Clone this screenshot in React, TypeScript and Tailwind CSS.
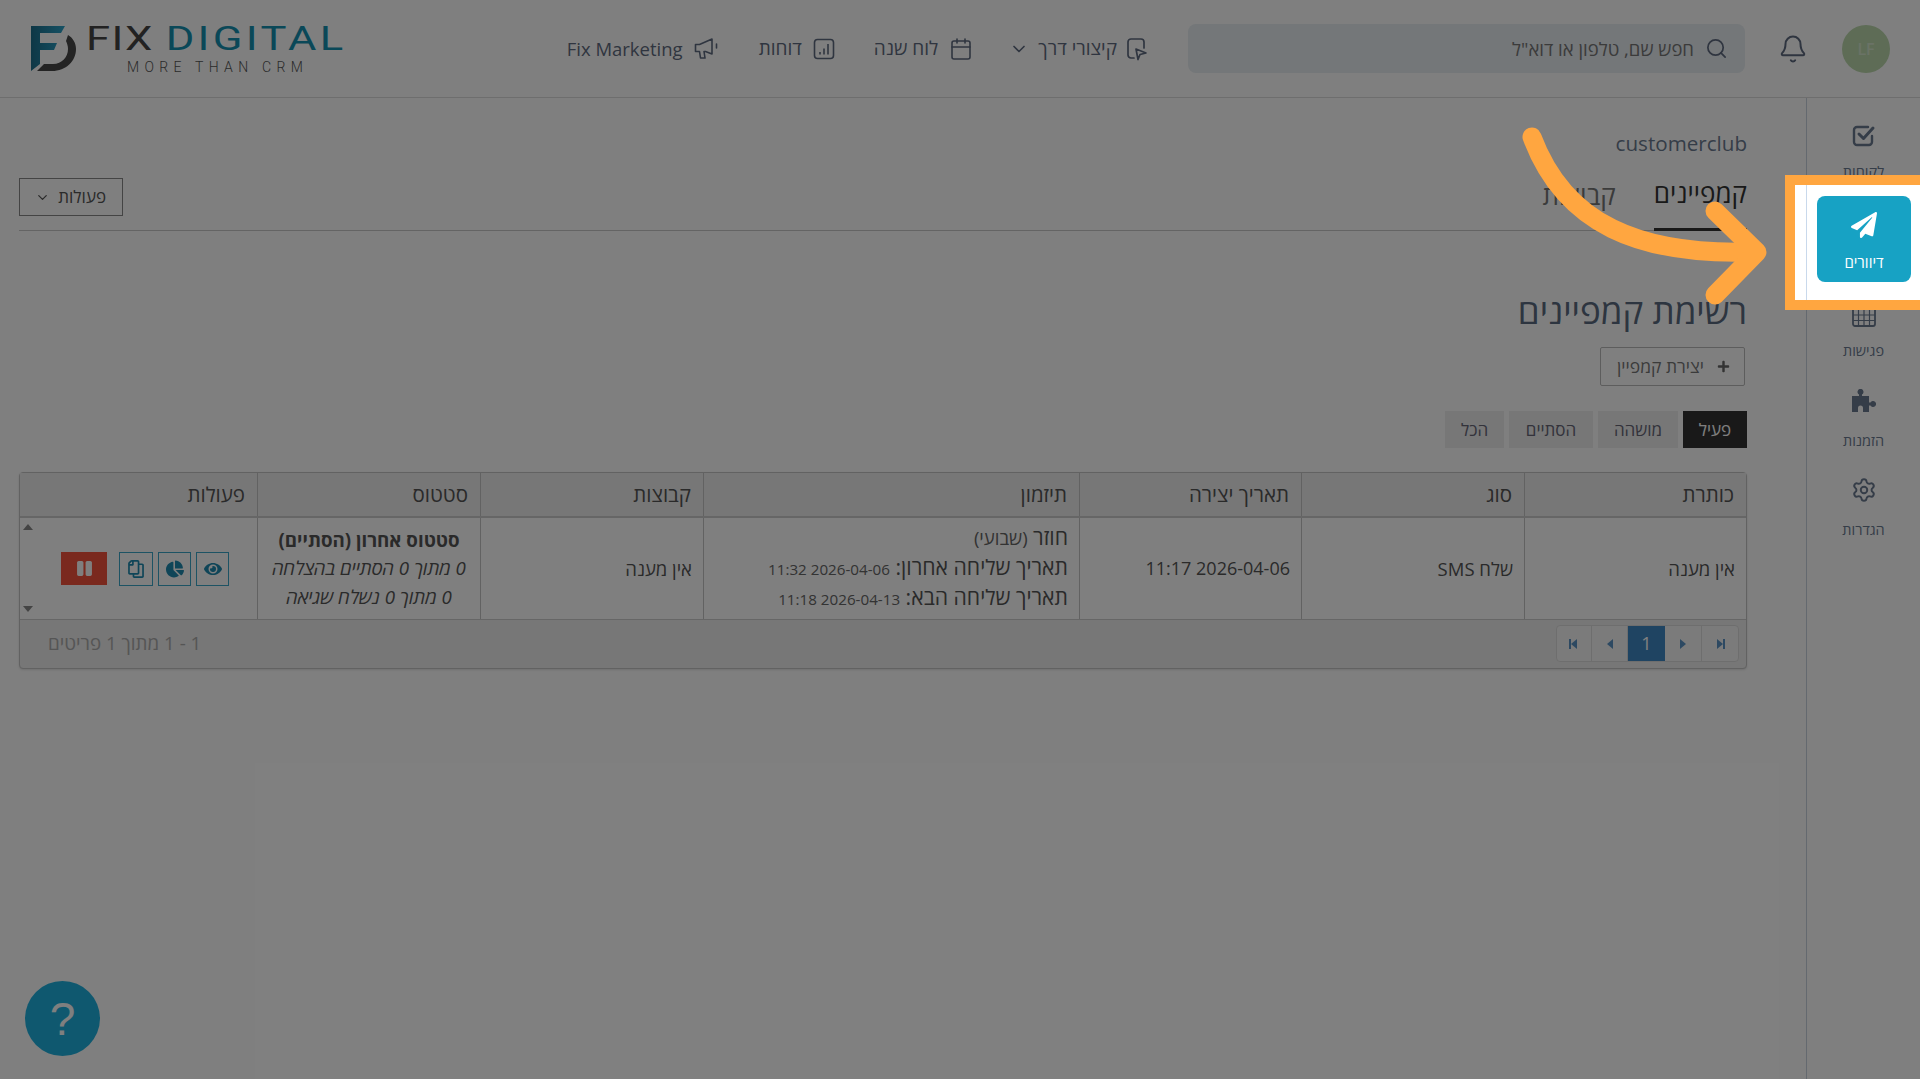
import React from "react";
import { Bell, Search, ChevronDown, Calendar, Settings } from "lucide-react";
import { FaPaperPlane, FaChartPie, FaEye, FaRegCopy, FaPlus, FaPause } from "react-icons/fa";

const Nav = ({ icon, label, size = "text-[19px]" }: { icon: React.ReactNode; label: string; size?: string }) => (
  <div className="flex items-center text-[#5f6b80]">
    {icon}
    <span className={`${size} font-medium text-[#5f6b80] mr-[11px]`}>{label}</span>
  </div>
);

const Tri = ({ dir, bar }: { dir: "l" | "r"; bar?: boolean }) => (
  <svg width="14" height="14" viewBox="0 0 14 14" fill="#5b93c4">
    {dir === "l" ? <path d="M10 2v10L4 7z" /> : <path d="M4 2v10L10 7z" />}
    {bar && (dir === "l" ? <rect x="2" y="2" width="2" height="10" /> : <rect x="10" y="2" width="2" height="10" />)}
  </svg>
);

const SideItem = ({ icon, label, lift }: { icon: React.ReactNode; label: string; lift?: boolean }) => (
  <div className="w-[94px] h-[86px] flex flex-col items-center text-[#6b7a90]">
    <div className={`h-[60px] flex items-center justify-center ${lift ? "pb-[8px]" : ""}`}>{icon}</div>
    <span className="text-[14.5px] leading-[12px] text-[#6b7a90]">{label}</span>
  </div>
);

const Th = ({ w, children }: { w: string; children: React.ReactNode }) => (
  <div className={`${w} h-full flex items-center px-[12px] border-l border-[#c4c4c4] last:border-l-0 text-[20.5px] text-[#555]`}>{children}</div>
);

const Td = ({ w, children }: { w: string; children: React.ReactNode }) => (
  <div className={`${w} h-full flex items-center px-[11px] border-l border-[#c4c4c4] last:border-l-0 text-[18.5px] text-[#555]`}>{children}</div>
);

export default function App() {
  return (
    <div dir="rtl" className="relative w-[1920px] h-[1079px] overflow-hidden bg-white font-['Open_Sans','Noto_Sans',sans-serif]">
      <header className="h-[98px] border-b border-[#dcdcdc] flex items-center pr-[30px] pl-[31px]">
        <div className="w-[48px] h-[48px] rounded-full bg-[#bcd9ad] flex items-center justify-center text-[#d5e6cc] text-[16px] font-semibold" dir="ltr">LF</div>
        <Bell size={30} strokeWidth={1.6} className="text-[#5f6b80] mr-[34px]" />
        <div className="w-[557px] h-[49px] mr-[33px] rounded-[8px] bg-[#e8eef2] flex items-center pr-[17px]">
          <Search size={23} strokeWidth={1.8} className="text-[#5f6b80]" />
          <span className="mr-[11px] text-[18.5px] text-[#777]">חפש שם, טלפון או דוא"ל</span>
        </div>
        <div className="flex items-center mr-[40px]">
          <svg width="22" height="24" viewBox="0 0 22 24" fill="none" stroke="#5f6b80" strokeWidth="1.7" strokeLinejoin="round" strokeLinecap="round">
            <path d="M8 21H5a3 3 0 0 1-3-3V5a3 3 0 0 1 3-3h10a3 3 0 0 1 3 3v6" />
            <path d="M10 12l10 4-6 1.500-2 5z" />
          </svg>
          <span className="mr-[9px] text-[19px] font-medium text-[#5f6b80]">קיצורי דרך</span>
          <ChevronDown size={20} className="mr-[9px] text-[#5f6b80]" />
        </div>
        <div className="mr-[36px]">
          <Nav icon={<Calendar size={24} strokeWidth={1.6} />} label="לוח שנה" />
        </div>
        <div className="mr-[39px]">
          <Nav
            icon={
              <svg width="22" height="22" viewBox="0 0 22 22" fill="none" stroke="#5f6b80" strokeWidth="1.6">
                <rect x="1.500" y="1.500" width="19" height="19" rx="3" />
                <path d="M7 16.500v-2.500M11 16.500v-6M15 16.500V6" />
              </svg>
            }
            label="דוחות"
          />
        </div>
        <div className="mr-[40px]">
          <Nav
            size="text-[18.5px]"
            icon={
              <svg width="25" height="24" viewBox="0 0 25 24" fill="none" stroke="#5f6b80" strokeWidth="1.6" strokeLinejoin="round" strokeLinecap="round">
                <path d="M1.500 7.500h4L18 2v15l-6.500-2.500h-1.500l1 6.500H6.500l-1-6.500H1.500z" />
                <path d="M22.500 7v4" />
              </svg>
            }
            label="Fix Marketing"
          />
        </div>
        <div dir="ltr" className="mr-auto w-[312px] h-[46px] flex items-start">
          <svg width="48" height="46" viewBox="0 0 48 46">
            <defs>
              <linearGradient id="g" x1="0" y1="0" x2="1" y2="0">
                <stop offset="0" stopColor="#1d6f8c" />
                <stop offset="1" stopColor="#2ca3c9" />
              </linearGradient>
            </defs>
            <path d="M0 0h34l-4 7H9v10h17l-3 7H9v14l-9 7z" fill="url(#g)" />
            <path d="M37 9c5 3 8 8 8 14 0 12-10 22-24 22H6l7-7h9c9 0 15-7 15-15 0-3-1-6-2-8z" fill="#484848" />
          </svg>
          <div className="ml-[7px] flex flex-col items-start">
            <div className="text-[32.5px] leading-[26px] font-['Roboto',sans-serif] font-normal whitespace-nowrap h-[27px] origin-left scale-x-[1.34]">
              <span className="text-[#444] tracking-[1px]">FIX</span>
              <span className="text-[#1490b0] ml-[9px] tracking-[2.5px]">DIGITAL</span>
            </div>
            <div className="mt-[7px] ml-[41px] text-[14px] leading-[14px] tracking-[5.300px] font-['Roboto',sans-serif] font-light text-[#555] whitespace-nowrap">MORE THAN CRM</div>
          </div>
        </div>
      </header>

      <div className="flex h-[981px]">
        <aside className="w-[114px] h-full border-l border-[#c9d2de] flex flex-col items-center pt-[8px] gap-[3.500px]">
          <SideItem
            icon={
              <svg width="24" height="24" viewBox="0 0 24 24" fill="none" stroke="#6b7a90" strokeWidth="2.400" strokeLinecap="round" strokeLinejoin="round">
                <path d="M20 12v6a3 3 0 0 1-3 3H5a3 3 0 0 1-3-3V6a3 3 0 0 1 3-3h11" />
                <path d="M7 10l4.500 4.500L21 4" strokeWidth="3" />
              </svg>
            }
            label="לקוחות"
          />
          <div className="w-[94px] h-[86px]" />
          <SideItem
            icon={
              <svg width="24" height="24" viewBox="0 0 24 24" fill="none" stroke="#6b7a90" strokeWidth="1.200">
                <rect x="1" y="1" width="22" height="22" rx="2" strokeWidth="1.800" />
                <path d="M1 6.500h22M1 12h22M1 17.500h22M6.500 1v22M12 1v22M17.500 1v22" />
              </svg>
            }
            label="פגישות"
          />
          <SideItem
            lift
            icon={
              <svg width="24" height="24" viewBox="0 0 24 24" fill="#6b7a90">
                <path d="M0 7H7V5.500A3 3 0 1 1 10 5.500V7H17V13.500H18.500A3 3 0 1 1 18.500 16.500H17V23H11V19A2.500 2.500 0 0 0 6 19V23H0Z" />
              </svg>
            }
            label="הזמנות"
          />
          <SideItem lift icon={<Settings size={26} strokeWidth={1.8} />} label="הגדרות" />
        </aside>

        <main className="flex-1 pr-[59px] pl-[19px] pt-[31px]">
          <div className="text-[20.6px] leading-[28px] text-[#6b7a90] font-medium" dir="ltr">
            <div className="text-right">customerclub</div>
          </div>
          <div className="h-[74px] border-b border-[#c9c9c9] flex items-start justify-between">
            <div className="flex items-start gap-[38px]">
              <div className="h-[74px] pt-[2px] border-b-[3px] border-[#333] flex items-center text-[26px] text-[#333]">קמפיינים</div>
              <div className="h-[74px] pt-[2px] flex items-center text-[26px] text-[#777]">קבוצות</div>
            </div>
            <button className="mt-[21px] w-[104px] h-[38px] border-[1.5px] border-[#888] flex items-center justify-between pr-[16px] pl-[15px] text-[17px] text-[#555]">
              פעולות
              <ChevronDown size={15} />
            </button>
          </div>
          <h1 className="mt-[58px] text-[35px] leading-[44px] font-medium text-[#5a6a80]">רשימת קמפיינים</h1>
          <button className="mt-[14px] mr-[2px] w-[145px] h-[39px] border border-[#bbb] rounded-[2px] flex items-center pr-[14px] text-[17.5px] text-[#777]">
            <FaPlus size={13} className="text-[#666]" />
            <span className="mr-[13px]">יצירת קמפיין</span>
          </button>
          <div className="mt-[25px] flex gap-[5px]">
            <div className="w-[64px] h-[37px] bg-[#333] text-white text-[17px] flex items-center justify-center">פעיל</div>
            <div className="w-[80px] h-[37px] bg-[#eee] text-[#667] text-[17px] flex items-center justify-center">מושהה</div>
            <div className="w-[84px] h-[37px] bg-[#eee] text-[#667] text-[17px] flex items-center justify-center">הסתיים</div>
            <div className="w-[59px] h-[37px] bg-[#eee] text-[#667] text-[17px] flex items-center justify-center">הכל</div>
          </div>
          <div className="mt-[24px] h-[197px] w-[1728px] border border-[#c4c4c4] rounded-[4px] bg-[#eee] shadow-sm">
            <div className="h-[45px] bg-[#eee] border-b-2 border-[#ccc] flex">
              <Th w="w-[222px]">כותרת</Th>
              <Th w="w-[223px]">סוג</Th>
              <Th w="w-[222px]">תאריך יצירה</Th>
              <Th w="w-[376px]">תיזמון</Th>
              <Th w="w-[223px]">קבוצות</Th>
              <Th w="w-[223px]">סטטוס</Th>
              <Th w="flex-1">פעולות</Th>
            </div>
            <div className="h-[102px] bg-white border-b border-[#ccc] flex">
              <Td w="w-[222px]">אין מענה</Td>
              <Td w="w-[223px]">שלח SMS</Td>
              <Td w="w-[222px]"><span className="text-[18px]">2026-04-06 11:17</span></Td>
              <Td w="w-[376px]">
                <div className="leading-[28.500px] text-[21.2px] text-[#555]">
                  <div>חוזר <span className="text-[18.500px] text-[#666]">(שבועי)</span></div>
                  <div>תאריך שליחה אחרון: <span className="text-[15.2px] text-[#666]">2026-04-06 11:32</span></div>
                  <div>תאריך שליחה הבא: <span className="text-[15.2px] text-[#666]">2026-04-13 11:18</span></div>
                </div>
              </Td>
              <Td w="w-[223px]">אין מענה</Td>
              <Td w="w-[223px]">
                <div className="w-full text-center leading-[28.500px] text-[18.700px]">
                  <div className="font-bold text-[#555]">סטטוס אחרון (הסתיים)</div>
                  <div className="italic">0 מתוך 0 הסתיים בהצלחה</div>
                  <div className="italic">0 מתוך 0 נשלח שגיאה</div>
                </div>
              </Td>
              <div className="relative flex-1 h-full flex items-center pr-[28px]">
                <div className="flex items-center gap-[5px]">
                  <div className="w-[33px] h-[34px] border border-[#3ba6c8] flex items-center justify-center text-[#1f8bb0]"><FaEye size={18} /></div>
                  <div className="w-[33px] h-[34px] border border-[#3ba6c8] flex items-center justify-center text-[#1f8bb0]"><FaChartPie size={18} /></div>
                  <div className="w-[34px] h-[34px] border border-[#3ba6c8] flex items-center justify-center text-[#1f8bb0]"><FaRegCopy size={18} className="-scale-x-100" /></div>
                </div>
                <div className="w-[46px] h-[33px] mr-[12px] bg-[#f4533c] flex items-center justify-center text-white"><FaPause size={17} /></div>
                <svg className="absolute left-[3px] top-[6px]" width="10" height="6" viewBox="0 0 10 6" fill="#888"><path d="M5 0l5 6H0z" /></svg>
                <svg className="absolute left-[3px] bottom-[7px]" width="10" height="6" viewBox="0 0 10 6" fill="#888"><path d="M0 0h10L5 6z" /></svg>
              </div>
            </div>
            <div className="h-[47px] flex items-center justify-between pr-[7px] pl-[28px]">
              <div dir="ltr" className="flex h-[37px] rounded-[4px] border border-[#ddd] bg-[#f7f7f7]">
                <div className="w-[35px] flex items-center justify-center border-r border-[#ddd]"><Tri dir="l" bar /></div>
                <div className="w-[36px] flex items-center justify-center border-r border-[#ddd]"><Tri dir="l" /></div>
                <div className="w-[37px] flex items-center justify-center bg-[#3f88c5] text-white text-[18px]">1</div>
                <div className="w-[37px] flex items-center justify-center border-r border-[#ddd]"><Tri dir="r" /></div>
                <div className="w-[36px] flex items-center justify-center"><Tri dir="r" bar /></div>
              </div>
              <span className="text-[18.800px] text-[#aaa]">1 - 1 מתוך 1 פריטים</span>
            </div>
          </div>
        </main>
      </div>

      <div className="absolute left-[25px] bottom-[23px] w-[75px] h-[75px] rounded-full bg-[#1fb0de] flex items-center justify-center text-white text-[46px] leading-none font-light font-['Liberation_Sans',sans-serif]">
        ?
      </div>

      <div className="absolute inset-0 bg-black/50" />

      <div className="absolute left-[1785px] top-[175px] w-[135px] h-[135px] border-[10px] border-r-0 border-[#ffa640] bg-white">
        <div className="absolute left-[11px] top-0 bottom-0 w-px bg-[#c9d9ec]" />
        <div className="absolute left-[22px] top-[11px] w-[94px] h-[86px] rounded-[8px] bg-[#17a2c4] flex flex-col items-center text-white">
          <FaPaperPlane size={26} className="mt-[16px]" />
          <span className="mt-[16px] text-[15px] font-medium leading-[16px]">דיוורים</span>
        </div>
      </div>

      <svg className="absolute left-0 top-0 pointer-events-none" width="1920" height="1079" fill="none" stroke="#ffa640" strokeWidth="19" strokeLinecap="round" strokeLinejoin="round">
        <path d="M1532 137C1565 225 1640 255 1750 252" />
        <path d="M1715 211L1757 252L1715 295" />
      </svg>
    </div>
  );
}
